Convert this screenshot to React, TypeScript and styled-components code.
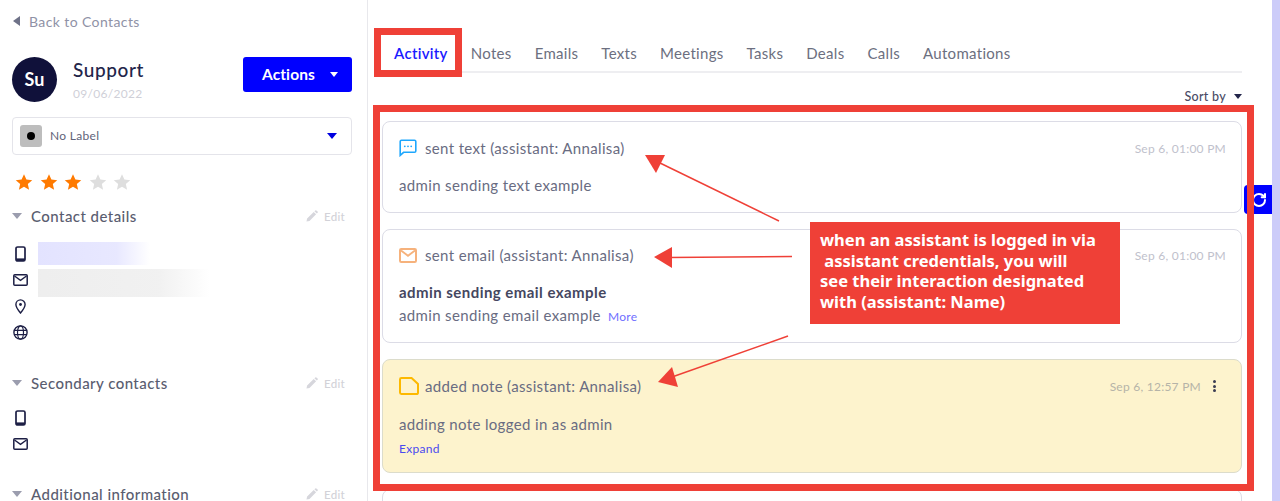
import React from "react";
import styled, { createGlobalStyle } from "styled-components";
import { RotateCw } from "lucide-react";

const Global = createGlobalStyle`
  html, body { margin: 0; padding: 0; background: #fff; height: 501px; overflow: hidden; }
  body { font-family: "Lato", "Noto Sans", sans-serif; color: #5f6379; }
  * { box-sizing: border-box; }
`;

const Page = styled.div`
  position: relative;
  display: flex;
  width: 1280px;
  height: 501px;
  overflow: hidden;
`;

const Sidebar = styled.aside`
  width: 368px;
  flex: none;
  padding: 0 15px 0 12px;
  border-right: 1px solid #e8e8ec;
`;

const BackLink = styled.div`
  height: 44px;
  display: flex;
  align-items: center;
  gap: 9px;
  padding: 0 0 2px 1px;
  font-size: 14px;
  letter-spacing: 0.4px;
  color: #8f92a6;
`;

const LeftCaret = styled.span`
  width: 0;
  height: 0;
  border-top: 5px solid transparent;
  border-bottom: 5px solid transparent;
  border-right: 7px solid #6f7288;
`;

const Header = styled.div`
  margin-top: 12px;
  height: 46px;
  display: flex;
  align-items: center;
`;

const Avatar = styled.div`
  width: 45px;
  height: 45px;
  border-radius: 50%;
  background: #10113a;
  color: #fff;
  display: flex;
  align-items: center;
  justify-content: center;
  font-size: 18px;
  font-weight: 700;
  flex: none;
`;

const NameBlock = styled.div`
  margin-left: 16px;
  flex: 1;
`;

const Name = styled.div`
  font-size: 19px;
  line-height: 24px;
  letter-spacing: 0.6px;
  color: #23254a;
  font-weight: 500;
`;

const DateText = styled.div`
  margin-top: 4px;
  font-size: 12px;
  line-height: 15px;
  letter-spacing: 0.3px;
  color: #cfd0d8;
`;

const ActionsButton = styled.div`
  width: 109px;
  height: 35px;
  align-self: flex-start;
  margin-top: 1px;
  padding: 0 0 1px 19px;
  background: #0000ff;
  border-radius: 3px;
  color: #fff;
  font-size: 15.5px;
  font-weight: 700;
  letter-spacing: 0.1px;
  display: flex;
  align-items: center;
  gap: 15px;
`;

const Caret = styled.span<{ $color: string; $w?: number }>`
  width: 0;
  height: 0;
  border-left: ${(p) => p.$w ?? 4.5}px solid transparent;
  border-right: ${(p) => p.$w ?? 4.5}px solid transparent;
  border-top: ${(p) => Math.round((p.$w ?? 4.5) * 1.1)}px solid ${(p) => p.$color};
  flex: none;
`;

const LabelSelect = styled.div`
  margin-top: 15px;
  height: 38px;
  border: 1px solid #e4e4ea;
  border-radius: 4px;
  display: flex;
  align-items: center;
  padding: 0 14px 0 7px;
  font-size: 12px;
  letter-spacing: 0.3px;
  color: #5f6379;
`;

const LabelSwatch = styled.span`
  width: 22px;
  height: 22px;
  border-radius: 3px;
  background: #bdbdbd;
  display: flex;
  align-items: center;
  justify-content: center;
  margin-right: 8px;
  &::after {
    content: "";
    width: 8px;
    height: 8px;
    border-radius: 50%;
    background: #000;
  }
`;

const LabelText = styled.span`
  flex: 1;
  padding-bottom: 2px;
`;

const Stars = styled.div`
  margin-top: 16px;
  height: 22px;
  display: flex;
  align-items: center;
  gap: 6.6px;
  padding-left: 3px;
`;

const SectionHeader = styled.div<{ $top: number }>`
  margin-top: ${(p) => p.$top}px;
  height: 20px;
  display: flex;
  align-items: center;
  font-size: 15px;
  font-weight: 500;
  letter-spacing: 0.45px;
  color: #5a5d70;
`;

const SectionTitle = styled.span`
  flex: 1;
  margin-left: 9px;
`;

const EditLink = styled.span`
  display: flex;
  align-items: center;
  gap: 6px;
  font-size: 11.5px;
  letter-spacing: 0.3px;
  color: #d2d2d8;
  margin-right: 7px;
`;

const ContactRows = styled.div<{ $top: number }>`
  margin-top: ${(p) => p.$top}px;
`;

const ContactRow = styled.div`
  height: 26px;
  display: flex;
  align-items: center;
  gap: 10px;
  padding-left: 1px;
`;

const IconCell = styled.span`
  width: 15px;
  display: flex;
  justify-content: center;
  flex: none;
`;

const BlurredValue = styled.span<{ $w: number; $h: number; $rgb: string; $drop: number }>`
  width: ${(p) => p.$w}px;
  height: ${(p) => p.$h}px;
  margin-top: ${(p) => p.$drop}px;
  flex: none;
  background: linear-gradient(90deg, rgba(${(p) => p.$rgb}, 0.9), rgba(${(p) => p.$rgb}, 0.75) 70%, rgba(${(p) => p.$rgb}, 0));
`;

const Main = styled.main`
  flex: 1;
  padding: 0 30px 0 14px;
`;

const TabBar = styled.nav`
  margin: 34px 0 0 -1px;
  height: 39px;
  padding: 0 0 0 13px;
  display: flex;
  align-items: center;
  gap: 23px;
  border-bottom: 2px solid #eeeef1;
`;

const Tab = styled.span<{ $active?: boolean }>`
  font-size: 15px;
  letter-spacing: 0.3px;
  font-weight: ${(p) => (p.$active ? 600 : 400)};
  color: ${(p) => (p.$active ? "#1a1aff" : "#6c6f80")};
`;

const SortRow = styled.div`
  margin-top: 15px;
  height: 16px;
  display: flex;
  justify-content: flex-end;
  align-items: center;
  gap: 8px;
  font-size: 12.5px;
  font-weight: 500;
  letter-spacing: 0.3px;
  color: #4a4c66;
`;

const Cards = styled.div`
  margin-top: 17px;
  display: flex;
  flex-direction: column;
  gap: 16px;
`;

const Card = styled.article<{ $note?: boolean; $h: number }>`
  height: ${(p) => p.$h}px;
  border: 1.5px solid ${(p) => (p.$note ? "#dcdccb" : "#dcdce6")};
  border-radius: 8px;
  background: ${(p) => (p.$note ? "#fdf3cd" : "#fff")};
  padding: 0 15px 0 16px;
`;

const CardHead = styled.div<{ $h: number }>`
  height: ${(p) => p.$h}px;
  display: flex;
  align-items: center;
`;

const IconSlot = styled.span`
  width: 26px;
  flex: none;
  display: flex;
  align-items: center;
`;

const CardTitle = styled.span`
  flex: 1;
  font-size: 15px;
  letter-spacing: 0.35px;
  color: #696c82;
`;

const Stamp = styled.span`
  font-size: 12px;
  letter-spacing: 0.25px;
  color: #c0c1cc;
`;

const NoteStamp = styled(Stamp)`
  color: #b5b3a8;
`;

const Kebab = styled.span`
  margin: 0 10px 0 12px;
  display: flex;
  flex-direction: column;
  gap: 1.5px;
  & > i {
    width: 3px;
    height: 3px;
    border-radius: 50%;
    background: #3b3c52;
  }
`;

const BodyText = styled.p<{ $top: number }>`
  margin: ${(p) => p.$top}px 0 0;
  font-size: 15px;
  line-height: 20px;
  letter-spacing: 0.35px;
  color: #696c82;
`;

const BoldText = styled(BodyText)`
  font-weight: 700;
  letter-spacing: 0.45px;
  color: #45475f;
`;

const InlineLink = styled.span`
  margin-left: 7px;
  font-size: 12px;
  color: #6f6fff;
`;

const ExpandLink = styled.div`
  margin-top: 7px;
  font-size: 12px;
  line-height: 16px;
  letter-spacing: 0.3px;
  color: #4a4af0;
`;

const RefreshTab = styled.div`
  position: absolute;
  left: 1244px;
  top: 185px;
  width: 28px;
  height: 29px;
  background: #0000ff;
  border-radius: 4px 0 0 4px;
  display: flex;
  align-items: center;
  justify-content: flex-end;
  padding-right: 5px;
  color: #fff;
`;

const Strip = styled.div`
  width: 8px;
  flex: none;
  background: #ccccf9;
`;

const Frame = styled.div<{ $x: number; $y: number; $w: number; $h: number }>`
  position: absolute;
  left: ${(p) => p.$x}px;
  top: ${(p) => p.$y}px;
  width: ${(p) => p.$w}px;
  height: ${(p) => p.$h}px;
  border: 7px solid #ef4037;
  pointer-events: none;
`;

const Callout = styled.div`
  position: absolute;
  left: 810px;
  top: 222px;
  width: 310px;
  height: 102px;
  background: #ef4037;
  padding: 8px 10px;
  color: #fff;
  font-family: "Noto Sans", "Open Sans", sans-serif;
  font-size: 16.5px;
  line-height: 20.7px;
  font-weight: 700;
  white-space: pre;
`;

const ArrowLayer = styled.svg`
  position: absolute;
  left: 0;
  top: 0;
  pointer-events: none;
`;

const Star = ({ on }: { on: boolean }) => (
  <svg width="18" height="18" viewBox="0 0 24 24" aria-hidden>
    <path d="M12 1.5l3.2 7.2 7.8.8-5.9 5.2 1.7 7.7L12 18.4l-6.8 4 1.7-7.7L1 9.5l7.8-.8z" fill={on ? "#ff7a00" : "#dedede"} />
  </svg>
);

const Pencil = () => (
  <svg width="12" height="12" viewBox="0 0 12 12" aria-hidden>
    <path d="M0.5 11.5l.6-3 6.6-6.6 2.4 2.4-6.6 6.6zM8.4 1.2l.9-.8a.8.8 0 0 1 1.1 0l1.2 1.2a.8.8 0 0 1 0 1.1l-.8.9z" fill="#d6d6dc" />
  </svg>
);

const Phone = () => (
  <svg width="11" height="16" viewBox="0 0 11 16" aria-hidden>
    <rect x="1" y="1" width="9" height="14" rx="1.6" fill="none" stroke="#1d1f45" strokeWidth="1.7" />
    <rect x="1" y="12.4" width="9" height="2.6" fill="#1d1f45" />
  </svg>
);

const Mail = () => (
  <svg width="15" height="12" viewBox="0 0 15 12" aria-hidden>
    <rect x="0.8" y="0.8" width="13.4" height="10.4" rx="1" fill="none" stroke="#1d1f45" strokeWidth="1.5" />
    <path d="M1.5 2l6 4.4 6-4.4" fill="none" stroke="#1d1f45" strokeWidth="1.4" />
  </svg>
);

const Pin = () => (
  <svg width="11" height="15" viewBox="0 0 11 15" aria-hidden>
    <path d="M5.5 14C3 11 .9 8.2.9 5.5a4.6 4.6 0 0 1 9.2 0C10.1 8.2 8 11 5.5 14z" fill="none" stroke="#1d1f45" strokeWidth="1.4" />
    <circle cx="5.5" cy="5.5" r="1.4" fill="#1d1f45" />
  </svg>
);

const Globe = () => (
  <svg width="15" height="15" viewBox="0 0 15 15" fill="none" stroke="#1d1f45" strokeWidth="1.2" aria-hidden>
    <circle cx="7.5" cy="7.5" r="6.6" strokeWidth="1.4" />
    <ellipse cx="7.5" cy="7.5" rx="3" ry="6.6" />
    <path d="M1 5.3h13M1 9.7h13" />
  </svg>
);

const ChatIcon = () => (
  <svg width="18" height="18" viewBox="0 0 18 18" aria-hidden>
    <path d="M2.5 1.2h13a1.3 1.3 0 0 1 1.3 1.3v9.5a1.3 1.3 0 0 1-1.3 1.3H4.6L1.2 16.4V2.5a1.3 1.3 0 0 1 1.3-1.3z" fill="none" stroke="#1ea7fd" strokeWidth="1.6" />
    <circle cx="5.8" cy="7.3" r="0.9" fill="#1ea7fd" />
    <circle cx="9" cy="7.3" r="0.9" fill="#1ea7fd" />
    <circle cx="12.2" cy="7.3" r="0.9" fill="#1ea7fd" />
  </svg>
);

const EmailIcon = () => (
  <svg width="18" height="15" viewBox="0 0 18 15" aria-hidden>
    <rect x="1" y="1" width="16" height="13" rx="1.2" fill="#fff" stroke="#f6b27c" strokeWidth="2" />
    <path d="M2 2.5l7 5.3 7-5.3" fill="none" stroke="#f6b27c" strokeWidth="1.8" />
  </svg>
);

const NoteIcon = () => (
  <svg width="20" height="18" viewBox="0 0 20 18" aria-hidden>
    <path d="M2.4 1h10.2l6.4 6v8.4a1.6 1.6 0 0 1-1.6 1.6H2.4A1.4 1.4 0 0 1 1 15.6V2.4A1.4 1.4 0 0 1 2.4 1z" fill="none" stroke="#fdb900" strokeWidth="2" />
  </svg>
);

const TABS = ["Notes", "Emails", "Texts", "Meetings", "Tasks", "Deals", "Calls", "Automations"];

const Section = ({ title, top }: { title: string; top: number }) => (
  <SectionHeader $top={top}>
    <Caret $color="#9b9dae" $w={5.5} />
    <SectionTitle>{title}</SectionTitle>
    <EditLink>
      <Pencil />
      Edit
    </EditLink>
  </SectionHeader>
);

export default function App() {
  return (
    <Page>
      <Global />
      <Sidebar>
        <BackLink>
          <LeftCaret />
          Back to Contacts
        </BackLink>
        <Header>
          <Avatar>Su</Avatar>
          <NameBlock>
            <Name>Support</Name>
            <DateText>09/06/2022</DateText>
          </NameBlock>
          <ActionsButton>
            Actions
            <Caret $color="#fff" />
          </ActionsButton>
        </Header>
        <LabelSelect>
          <LabelSwatch />
          <LabelText>No Label</LabelText>
          <Caret $color="#0000e0" $w={5.5} />
        </LabelSelect>
        <Stars>
          {[true, true, true, false, false].map((on, i) => (
            <Star key={i} on={on} />
          ))}
        </Stars>
        <Section title="Contact details" top={13} />
        <ContactRows $top={15}>
          <ContactRow>
            <IconCell><Phone /></IconCell>
            <BlurredValue $w={112} $h={23} $rgb="224,224,255" $drop={-2} />
          </ContactRow>
          <ContactRow>
            <IconCell><Mail /></IconCell>
            <BlurredValue $w={172} $h={28} $rgb="236,236,236" $drop={6} />
          </ContactRow>
          <ContactRow>
            <IconCell><Pin /></IconCell>
          </ContactRow>
          <ContactRow>
            <IconCell><Globe /></IconCell>
          </ContactRow>
        </ContactRows>
        <Section title="Secondary contacts" top={28} />
        <ContactRows $top={12}>
          <ContactRow>
            <IconCell><Phone /></IconCell>
          </ContactRow>
          <ContactRow>
            <IconCell><Mail /></IconCell>
          </ContactRow>
        </ContactRows>
        <Section title="Additional information" top={27} />
      </Sidebar>

      <Main>
        <TabBar>
          <Tab $active>Activity</Tab>
          {TABS.map((t) => (
            <Tab key={t}>{t}</Tab>
          ))}
        </TabBar>
        <SortRow>
          Sort by
          <Caret $color="#23254a" />
        </SortRow>
        <Cards>
          <Card $h={92}>
            <CardHead $h={52}>
              <IconSlot><ChatIcon /></IconSlot>
              <CardTitle>sent text (assistant: Annalisa)</CardTitle>
              <Stamp>Sep 6, 01:00 PM</Stamp>
            </CardHead>
            <BodyText $top={1}>admin sending text example</BodyText>
          </Card>
          <Card $h={114}>
            <CardHead $h={50}>
              <IconSlot><EmailIcon /></IconSlot>
              <CardTitle>sent email (assistant: Annalisa)</CardTitle>
              <Stamp>Sep 6, 01:00 PM</Stamp>
            </CardHead>
            <BoldText $top={2}>admin sending email example</BoldText>
            <BodyText $top={3}>
              admin sending email example<InlineLink>More</InlineLink>
            </BodyText>
          </Card>
          <Card $note $h={114}>
            <CardHead $h={52}>
              <IconSlot><NoteIcon /></IconSlot>
              <CardTitle>added note (assistant: Annalisa)</CardTitle>
              <NoteStamp>Sep 6, 12:57 PM</NoteStamp>
              <Kebab><i /><i /><i /></Kebab>
            </CardHead>
            <BodyText $top={2}>adding note logged in as admin</BodyText>
            <ExpandLink>Expand</ExpandLink>
          </Card>
          <Card $h={60} />
        </Cards>
      </Main>
      <Strip />

      <RefreshTab>
        <RotateCw size={16} strokeWidth={3} />
      </RefreshTab>
      <Frame $x={374} $y={28} $w={88} $h={49} />
      <Frame $x={373} $y={105} $w={881} $h={386} />
      <ArrowLayer width="1280" height="501" viewBox="0 0 1280 501">
        <g stroke="#ef4037" strokeWidth="1.5" fill="#ef4037">
          <line x1="779" y1="221" x2="660" y2="163" />
          <polygon points="645,155 665,155 656,173" stroke="none" />
          <line x1="792" y1="256.5" x2="668" y2="257.5" />
          <polygon points="654,257 672,247 672,268" stroke="none" />
          <line x1="788" y1="336" x2="672" y2="377" />
          <polygon points="658,382 672,367 678,387" stroke="none" />
        </g>
      </ArrowLayer>
      <Callout>{"when an assistant is logged in via\n assistant credentials, you will\nsee their interaction designated\nwith (assistant: Name)"}</Callout>
    </Page>
  );
}
